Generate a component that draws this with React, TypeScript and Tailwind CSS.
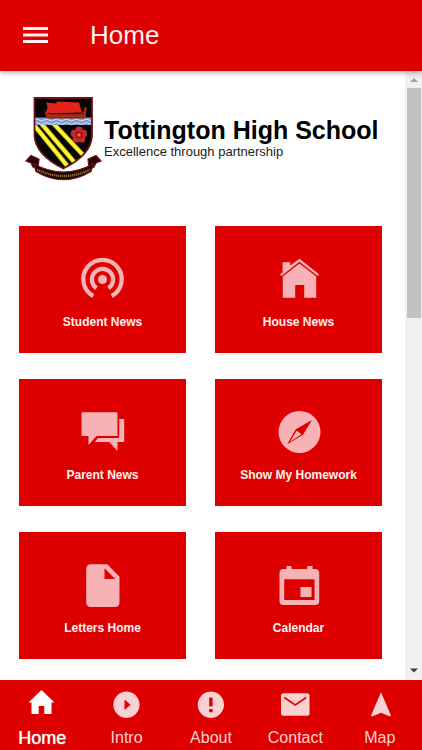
import type { ReactNode } from "react";

const RED = "#de0000";

function Crest() {
  return (
    <svg viewBox="0 0 80 90" className="h-[90px] w-[80px] shrink-0" role="img" aria-label="School crest">
      <defs>
        <clipPath id="shield">
          <path d="M10.500 4H68V42C67 57 55 67 39.3 74.5C24 67 11.500 57 10.500 42Z" />
        </clipPath>
      </defs>
      <path d="M10.500 4H68V42C67 57 55 67 39.3 74.5C24 67 11.500 57 10.500 42Z" fill="#050505" />
      <g clipPath="url(#shield)">
        <path d="M10 31 43 71.500M16 28 51 69M28 28 60 62" stroke="#6d6500" strokeWidth="5.200" />
        <path d="M10 31 43 71.500M16 28 51 69M28 28 60 62" stroke="#fff430" strokeWidth="3.800" />
        <rect x="10" y="23.500" width="60" height="7.500" fill="#7f9ccb" />
        <path d="M10 26q2.500-2 5 0t5 0 5 0 5 0 5 0 5 0 5 0 5 0 5 0 5 0 5 0 5 0M10 29.500q2.500-2 5 0t5 0 5 0 5 0 5 0 5 0 5 0 5 0 5 0 5 0 5 0 5 0" fill="none" stroke="#dbe6f5" strokeWidth="1" />
      </g>
      <path d="M19 14C22 20 24 20 28 20H53C58 20 60 18 61 13L63 13 61 24.500H23Z" fill="#8e2412" />
      <path d="M22 8.500 32 9.500 33 7.500 55 8.500 58 18.500 21 19.500C24 15 24 12 22 8.500Z" fill="#e2231a" />
      <path d="M22 22H61M24 24V20M61 24V13" stroke="#c0391b" strokeWidth="1" />
      <g fill="#c9252b">
        <circle cx="55" cy="36" r="3.600" />
        <circle cx="59.600" cy="39.400" r="3.600" />
        <circle cx="57.800" cy="45" r="3.600" />
        <circle cx="52.200" cy="45" r="3.600" />
        <circle cx="50.400" cy="39.400" r="3.600" />
      </g>
      <circle cx="55" cy="41" r="3.200" fill="#c9252b" stroke="#6d0d12" strokeWidth="0.900" />
      <circle cx="55" cy="41" r="1.200" fill="#d88a3a" />
      <path d="M10.500 4H68V42C67 57 55 67 39.3 74.5C24 67 11.500 57 10.500 42Z" fill="none" stroke="#701119" strokeWidth="1.800" />
      <path d="M2 67 7 61.500 15 65 14 75 9 73 7 69ZM77 67 72 61.500 64 65 65 75 70 73 72 69Z" fill="#2a0608" stroke="#701119" strokeWidth="1.200" />
      <path d="M10 70Q39.500 86 69 70L67 77.500Q39.500 94 12 77.500Z" fill="#180405" stroke="#701119" strokeWidth="1.200" />
      <path d="M13 75.500Q39.500 88.500 66 75.500" fill="none" stroke="#8a6c26" strokeWidth="2.400" strokeDasharray="1.300 0.700" />
    </svg>
  );
}

function TileIcon({ children }: { children: ReactNode }) {
  return (
    <svg viewBox="0 0 48 48" className="h-12 w-12" fill="#f6b2b4" aria-hidden="true">
      {children}
    </svg>
  );
}

const tiles: { label: string; icon: ReactNode }[] = [
  {
    label: "Student News",
    icon: (
      <>
        <circle cx="23.500" cy="24.500" r="4.500" />
        <path d="M14.300 41A19.200 19.200 0 1 1 32.700 41M17.500 33.200A10.600 10.600 0 1 1 29.500 33.200" fill="none" stroke="#f6b2b4" strokeWidth="4.300" />
      </>
    ),
  },
  {
    label: "House News",
    icon: (
      <>
        <path d="M7.600 7.300H15.200V10.500L24.500 3.800 44 19.300 42.700 21 24.500 6.700 6.300 21 5 19.300 7.600 17.200Z" />
        <path d="M24.500 8.600 41.200 21.600V42.700H29.200V30H20.200V42.700H7.800V21.600Z" />
      </>
    ),
  },
  {
    label: "Parent News",
    icon: (
      <>
        <path d="M3.500 4.300H37.500Q38.500 4.300 38.500 5.300V28H17.500L9.500 37V28H3.500Q2.500 28 2.500 27V5.300Q2.500 4.300 3.500 4.300Z" />
        <path d="M40.200 11H44.200Q45.200 11 45.200 12V33Q45.200 34 44.200 34H38.500V43L30.200 34H15.800L19 30H38.700Q40.200 30 40.200 28.500Z" />
      </>
    ),
  },
  {
    label: "Show My Homework",
    icon: (
      <>
        <circle cx="24.500" cy="24" r="21" />
        <path d="M37 12 28 26.700 12.200 36.300 20.800 21.300Z" fill={RED} />
        <path d="M21.700 22.800 26.600 26.200 15 33.800Z" />
      </>
    ),
  },
  {
    label: "Letters Home",
    icon: (
      <path
        fillRule="evenodd"
        d="M11.500 3.300H28.300L40.500 15.700V41.700A4.300 4.300 0 0 1 36.200 46H11.500A4.300 4.300 0 0 1 7.200 41.700V7.600A4.300 4.300 0 0 1 11.500 3.300ZM25.500 7.300V18H36.200Z"
      />
    ),
  },
  {
    label: "Calendar",
    icon: (
      <>
        <path
          fillRule="evenodd"
          d="M11.500 5H16.500V8H32.200V5H37.500V8H40.200A4 4 0 0 1 44.200 12V40A4 4 0 0 1 40.200 44H8.500A4 4 0 0 1 4.500 40V12A4 4 0 0 1 8.500 8H11.500ZM9.200 18.300V39H39.500V18.300Z"
        />
        <path d="M25.500 26H36.500V36H25.500Z" />
      </>
    ),
  },
];

const tabs: { label: string; icon: ReactNode }[] = [
  { label: "Home", icon: <path d="M15.500 1 28.500 13.500H25.500V25H18.300V17H12.700V25H5.500V13.500H2.500Z" /> },
  {
    label: "Intro",
    icon: <path fillRule="evenodd" d="M15.500 2.500A13.200 13.200 0 1 1 15.400 2.500ZM13.500 10.500V21L19.500 15.700Z" />,
  },
  {
    label: "About",
    icon: (
      <path fillRule="evenodd" d="M15.900 2.500A13.200 13.200 0 1 1 15.800 2.500ZM14.200 8.500V17.500H17.600V8.500ZM14.200 20V23.300H17.600V20Z" />
    ),
  },
  {
    label: "Contact",
    icon: (
      <>
        <rect x="2" y="4.300" width="28.500" height="22.500" rx="2.500" />
        <path d="M5.300 8.500 16.200 16 27.200 8.500" fill="none" stroke={RED} strokeWidth="1.600" />
      </>
    ),
  },
  { label: "Map", icon: <path d="M17 3.300 27 26.500 26 27.500 17 23.700 8 27.500 7 26.500Z" /> },
];

export default function App() {
  return (
    <div className="flex h-screen flex-col overflow-hidden bg-white font-['Liberation_Sans',Arial,sans-serif]">
      <header className="z-10 flex h-[71px] shrink-0 items-center bg-[#de0000] px-[23px] shadow-[0_2px_5px_rgba(0,0,0,0.3)]">
        <button type="button" aria-label="Open menu" className="mr-[42px] block">
          <svg viewBox="0 0 25 18" className="h-[18px] w-[25px]" fill="#fff2f2" aria-hidden="true">
            <path d="M0 0H25V3H0ZM0 6.500H25V9.500H0ZM0 13H25V16H0Z" />
          </svg>
        </button>
        <h1 className="pb-0.5 text-[26px] leading-8 text-[#fff2f2]">Home</h1>
      </header>

      <div className="flex min-h-0 flex-1">
        <main className="min-w-0 flex-1 overflow-hidden pt-[23px]">
          <div className="flex pl-6">
            <Crest />
            <div className="pt-[22px] whitespace-nowrap text-black">
              <p className="text-[25px] leading-7 font-bold">Tottington High School</p>
              <p className="text-[13px] leading-4 text-[#222222]">Excellence through partnership</p>
            </div>
          </div>
          <div className="mt-[42px] grid grid-cols-2 gap-x-[29px] gap-y-[26px] pr-[23px] pl-[19px]">
            {tiles.map((tile) => (
              <button
                key={tile.label}
                type="button"
                className="flex h-[127px] flex-col items-center bg-[#de0000] pt-[29px] text-xs font-bold text-[#fff0f0]"
              >
                <TileIcon>{tile.icon}</TileIcon>
                <span className="mt-[11px] leading-4">{tile.label}</span>
              </button>
            ))}
          </div>
        </main>

        <div className="flex w-[17px] shrink-0 flex-col items-center bg-[#f0f0f0]" aria-hidden="true">
          <svg viewBox="0 0 17 17" className="h-[17px] w-[17px]" fill="#a0a0a0">
            <path d="M5 11 9 7 13 11Z" />
          </svg>
          <div className="flex w-full flex-1 flex-col pr-px pl-0.5">
            <div className="h-2/5 bg-[#c1c1c1]" />
          </div>
          <svg viewBox="0 0 17 17" className="h-[17px] w-[17px]" fill="#404040">
            <path d="M5 5.500 9 9.500 13 5.500Z" />
          </svg>
        </div>
      </div>

      <nav className="grid h-[70px] shrink-0 grid-cols-5 bg-[#de0000]">
        {tabs.map((tab, i) => (
          <button
            key={tab.label}
            type="button"
            aria-current={i === 0 ? "page" : undefined}
            className={
              i === 0
                ? "flex flex-col items-center pt-[9px] text-lg text-white [text-shadow:0_0_1px_#ffffff]"
                : "flex flex-col items-center pt-[9px] text-base text-[#fbd0d2]"
            }
          >
            <svg viewBox="0 0 32 32" className="h-8 w-8" fill="currentColor" aria-hidden="true">
              {tab.icon}
            </svg>
            <span className="mt-[7px] leading-5">{tab.label}</span>
          </button>
        ))}
      </nav>
    </div>
  );
}
